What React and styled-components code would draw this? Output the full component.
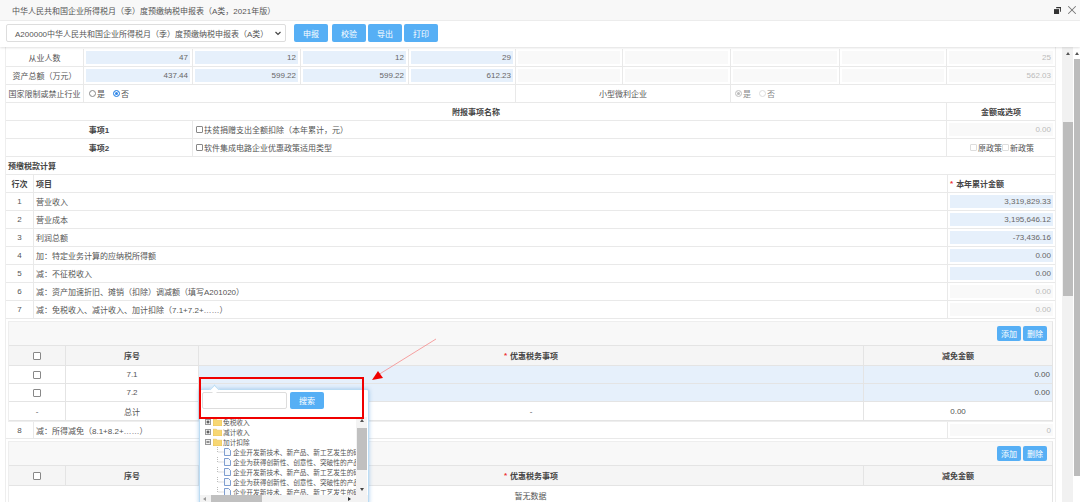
import React from 'react';
import styled, { createGlobalStyle } from 'styled-components';
import { X } from 'lucide-react';

const GlobalStyle = createGlobalStyle`
  html, body {
    margin: 0;
    padding: 0;
    background: #fff;
  }
  body {
    font-family: "Liberation Sans", "Noto Sans CJK SC", sans-serif;
    font-size: 8px;
    color: #555;
  }
`;

const Page = styled.div`
  position: relative;
  width: 1080px;
  height: 502px;
  overflow: hidden;
  display: flex;
  flex-direction: column;
`;

const TitleBar = styled.div`
  height: 20px;
  flex: none;
  display: flex;
  align-items: center;
  padding: 0 1.5px 0 12px;
  background: #f8f8f8;
  border-bottom: 1px solid #eee;
`;

const Title = styled.span`
  flex: 1;
`;

const WindowIcons = styled.div`
  display: flex;
  align-items: center;
  gap: 4px;
  color: #777;
`;

const Toolbar = styled.div`
  height: 26px;
  flex: none;
  display: flex;
  align-items: center;
  padding: 0 0 2px 6px;
  box-sizing: border-box;
  box-shadow: 0 1px 2px rgba(0, 0, 0, 0.12);
  position: relative;
  z-index: 1;
`;

const SelectBox = styled.div`
  width: 280px;
  height: 18px;
  box-sizing: border-box;
  border: 1px solid #ddd;
  border-radius: 2px;
  display: flex;
  align-items: center;
  justify-content: space-between;
  padding: 0 3px 0 8px;
  margin-right: 8px;
`;

const ActionButton = styled.button`
  width: ${(p) => p.$w || 34}px;
  height: ${(p) => p.$h || 18}px;
  margin-right: ${(p) => p.$gap ?? 2}px;
  padding: 0;
  border: none;
  border-radius: 2px;
  background: #56aff5;
  color: #fff;
  font: inherit;
  flex: none;
`;

const Body = styled.div`
  flex: 1;
  display: flex;
  min-height: 0;
`;

const Content = styled.div`
  width: 1049px;
  margin-left: 5px;
  padding-top: 2px;
  border-left: 1px solid #eee;
  border-right: 1px solid #eee;
  overflow: hidden;
`;

const Row = styled.div`
  display: grid;
  grid-template-columns: ${(p) => p.$cols};
  height: ${(p) => p.$h || 18}px;
  box-sizing: border-box;
  border-bottom: 1px solid #e9e9e9;
`;

const TOP_COLS = '78px 109px 108px 108px 107px 107px 108px 109px 107px 108px';

const Cell = styled.div`
  display: flex;
  align-items: center;
  justify-content: ${(p) => p.$align || 'flex-start'};
  padding: ${(p) => p.$pad || '0'};
  min-width: 0;
  white-space: nowrap;
  font-weight: ${(p) => (p.$bold ? 700 : 400)};
  color: ${(p) => (p.$bold ? '#444' : 'inherit')};
  border-right: ${(p) => (p.$last ? 'none' : '1px solid #e9e9e9')};
`;

const AmountBox = styled.div`
  flex: 1;
  align-self: stretch;
  margin: 2px;
  padding-right: 2px;
  display: flex;
  align-items: center;
  justify-content: flex-end;
  background: ${(p) => (p.$off ? '#f9f9f9' : '#e6f0fb')};
  color: ${(p) => (p.$off ? '#bbb' : '#666')};
`;

const Radio = styled.input.attrs({ type: 'radio', readOnly: true })`
  appearance: none;
  width: 7px;
  height: 7px;
  margin: 0 1px 0 0;
  border-radius: 50%;
  border: 1px solid ${(p) => (p.$off ? '#ddd' : '#888')};
  background: #fff;
  box-sizing: border-box;
  &:checked {
    border-color: ${(p) => (p.$off ? '#ccc' : '#3a8ee6')};
    background: ${(p) => (p.$off ? '#bbb' : '#2f86ea')};
    box-shadow: inset 0 0 0 1px #fff;
  }
`;

const RadioText = styled.span`
  margin-right: 8px;
  color: ${(p) => (p.$off ? '#888' : 'inherit')};
`;

const Check = styled.input.attrs({ type: 'checkbox', readOnly: true })`
  appearance: none;
  width: ${(p) => p.$size || 7}px;
  height: ${(p) => p.$size || 7}px;
  margin: 0 1px 0 0;
  border: 1px solid ${(p) => (p.$off ? '#ddd' : '#888')};
  border-radius: 1px;
  background: #fff;
  box-sizing: border-box;
  flex: none;
`;

const Star = styled.span`
  color: #e33;
  margin-right: 3px;
`;

const SubPanel = styled.div`
  margin: 2px 2px 0 2px;
  border: 1px solid #eee;
  border-right: 1px solid #e6e6e6;
`;

const PanelBar = styled.div`
  height: 23px;
  box-sizing: border-box;
  background: #f8f8f8;
  display: flex;
  align-items: center;
  justify-content: flex-end;
  padding: 0 5px 0 0;
`;

const SubTable = styled.div`
  width: 1044px;
  border: 1px solid #e4e4e4;
  border-width: 1px 1px 1px 0;
  box-sizing: border-box;
`;

const SUB_COLS = '57px 133px 665px 188px';

const SubRow = styled.div`
  display: grid;
  grid-template-columns: ${(p) => p.$cols || SUB_COLS};
  height: ${(p) => p.$h || 18}px;
  box-sizing: border-box;
  border-bottom: ${(p) => (p.$end ? 'none' : '1px solid #e4e4e4')};
  background: ${(p) => (p.$head ? '#f5f5f5' : '#fff')};
`;

const SubCell = styled.div`
  display: flex;
  align-items: center;
  justify-content: ${(p) => p.$align || 'center'};
  padding: ${(p) => p.$pad || '0'};
  background: ${(p) => (p.$blue ? '#e6f0fb' : 'transparent')};
  border-right: ${(p) => (p.$last ? 'none' : '1px solid #e4e4e4')};
  font-weight: ${(p) => (p.$bold ? 700 : 400)};
  color: ${(p) => (p.$bold ? '#444' : 'inherit')};
`;

const ScrollColumn = styled.div`
  width: ${(p) => p.$w}px;
  margin-left: ${(p) => p.$ml || 0}px;
  flex: none;
  display: flex;
  flex-direction: column;
  align-items: center;
  background: ${(p) => p.$bg || 'transparent'};
  overflow: hidden;
`;

const ScrollThumb = styled.div`
  flex: none;
  width: ${(p) => p.$w}px;
  height: ${(p) => p.$h}px;
  margin-top: ${(p) => p.$mt}px;
  background: #bcbcbc;
`;

const ArrowUp = styled.div`
  flex: none;
  margin-top: ${(p) => p.$mt || 5}px;
  width: 0;
  height: 0;
  border-left: 2.5px solid transparent;
  border-right: 2.5px solid transparent;
  border-bottom: 3px solid #555;
`;

/* things that lie over the page */
const Popup = styled.div`
  position: absolute;
  left: 199px;
  top: 389px;
  width: 170px;
  height: 116px;
  box-sizing: border-box;
  background: #fff;
  border: 1px solid #bcdcf3;
  border-radius: 2px;
  box-shadow: 0 0 4px rgba(110, 170, 225, 0.6);
  display: flex;
  flex-direction: column;
  z-index: 2;
  &::before {
    content: '';
    position: absolute;
    left: 11px;
    top: -4px;
    width: 6px;
    height: 6px;
    background: #fff;
    border-left: 1px solid #bcdcf3;
    border-top: 1px solid #bcdcf3;
    transform: rotate(45deg);
  }
`;

const SearchRow = styled.div`
  height: 27px;
  flex: none;
  display: flex;
  align-items: flex-start;
  padding: 2px 0 0 2px;
  box-sizing: border-box;
`;

const SearchInput = styled.input`
  width: 85px;
  height: 17px;
  box-sizing: border-box;
  border: 1px solid #ddd;
  border-radius: 2px;
  margin: 0 3px 0 0;
  padding: 0;
`;

const TreeArea = styled.div`
  height: 78px;
  flex: none;
  display: flex;
`;

const TreeList = styled.div`
  flex: 1;
  min-width: 0;
  overflow: hidden;
  font-size: 6.7px;
  padding-left: 5px;
`;

const TreeRow = styled.div`
  height: 10px;
  display: flex;
  align-items: center;
  white-space: nowrap;
  padding-left: ${(p) => (p.$leaf ? 12 : 0)}px;
`;

const TreeName = styled.span`
  margin-left: 1px;
`;

const TreeScroll = styled.div`
  width: 11px;
  flex: none;
  background: #f3f3f3;
  display: flex;
  flex-direction: column;
  align-items: center;
  margin-right: 1px;
`;

const TreeThumb = styled.div`
  width: 10px;
  height: 42px;
  margin-top: 6px;
  background: #c0c0c0;
`;

const ArrowDown = styled.div`
  width: 0;
  height: 0;
  margin-top: 18px;
  border-left: 2.5px solid transparent;
  border-right: 2.5px solid transparent;
  border-top: 3px solid #444;
`;

const HorizontalScroll = styled.div`
  height: 8px;
  background: #f3f3f3;
  display: flex;
  align-items: center;
  padding-left: 3px;
`;

const ArrowSide = styled.div`
  width: 0;
  height: 0;
  margin-right: ${(p) => p.$mr || 0}px;
  border-top: 2.5px solid transparent;
  border-bottom: 2.5px solid transparent;
  ${(p) => (p.$right ? 'border-left: 3px solid #333;' : 'border-right: 3px solid #999;')}
`;

const HorizontalThumb = styled.div`
  width: 51px;
  height: 8px;
  margin-right: 86px;
  background: #c0c0c0;
`;

const RedFrame = styled.div`
  position: absolute;
  left: 199px;
  top: 377px;
  width: 165px;
  height: 42px;
  box-sizing: border-box;
  border: 2px solid #f00000;
  z-index: 3;
  pointer-events: none;
`;

const ArrowMark = styled.svg`
  position: absolute;
  left: 368px;
  top: 336px;
  z-index: 3;
`;

const RestoreIcon = () => (
  <svg width="7" height="7" viewBox="0 0 8 8">
    <path d="M2.5 0H8v5.5H7V1.5H2.5z" fill="#333" />
    <rect x="0" y="2.4" width="5.8" height="5.6" fill="#333" />
  </svg>
);

const Chevron = () => (
  <svg width="8" height="8" viewBox="0 0 8 8" fill="none" stroke="#444" strokeWidth="1.2">
    <path d="M1.5 3l2.5 2.4L6.5 3" />
  </svg>
);

const ExpandBox = ({ open }) => (
  <svg width="6" height="6" viewBox="0 0 6 6" style={{ marginRight: 2, flex: 'none' }}>
    <rect x="0.5" y="0.5" width="5" height="5" fill="#eee" stroke="#999" />
    <path d={open ? 'M1.5 3h3' : 'M1.5 3h3M3 1.5v3'} stroke="#333" />
  </svg>
);

const Folder = () => (
  <svg width="9" height="8" viewBox="0 0 9 8" style={{ flex: 'none' }}>
    <path d="M0 1.2h3.4l1 1H9V8H0z" fill="#f7d774" stroke="#e3b94b" strokeWidth="0.5" />
  </svg>
);

const FileIcon = () => (
  <svg width="7" height="8" viewBox="0 0 7 8" style={{ flex: 'none', marginRight: 2 }}>
    <path d="M0.5 0.5h4l2 2v5h-6z" fill="#f4f8fd" stroke="#5f86c4" strokeWidth="0.8" />
  </svg>
);

const TreeLine = () => (
  <svg width="7" height="10" viewBox="0 0 7 10" style={{ flex: 'none' }}>
    <path d="M0.5 0v5H7" fill="none" stroke="#bbb" strokeDasharray="1 1" />
  </svg>
);

const topRows = [
  ['从业人数', ['47', '12', '12', '29'], '25'],
  ['资产总额（万元）', ['437.44', '599.22', '599.22', '612.23'], '562.03'],
];

const calcRows = [
  ['1', '营业收入', '3,319,829.33'],
  ['2', '营业成本', '3,195,646.12'],
  ['3', '利润总额', '-73,436.16'],
  ['4', '加：特定业务计算的应纳税所得额', '0.00'],
  ['5', '减：不征税收入', '0.00'],
  ['6', '减：资产加速折旧、摊销（扣除）调减额（填写A201020）', '0.00', true],
  ['7', '减：免税收入、减计收入、加计扣除（7.1+7.2+……）', '0.00', true],
];

const leaves = [
  '企业开发新技术、新产品、新工艺发生的研究开发费用加计扣除',
  '企业为获得创新性、创意性、突破性的产品进行创意设计活动',
  '企业开发新技术、新产品、新工艺发生的研究开发费用加计扣除',
  '企业为获得创新性、创意性、突破性的产品进行创意设计活动',
  '企业开发新技术、新产品、新工艺发生的研究开发费用加计扣除',
];

const CALC_COLS = '28px 914px 107px';

function DeductPanel({ children }) {
  return (
    <SubPanel>
      <PanelBar>
        <ActionButton $w={24} $h={15} $gap={2}>添加</ActionButton>
        <ActionButton $w={24} $h={15} $gap={0}>删除</ActionButton>
      </PanelBar>
      <SubTable>
        <SubRow $head $h={20}>
          <SubCell><Check $size={8} /></SubCell>
          <SubCell $bold>序号</SubCell>
          <SubCell $bold><Star>*</Star>优惠税务事项</SubCell>
          <SubCell $bold $last>减免金额</SubCell>
        </SubRow>
        {children}
      </SubTable>
    </SubPanel>
  );
}

export default function App() {
  return (
    <Page>
      <GlobalStyle />
      <TitleBar>
        <Title>中华人民共和国企业所得税月（季）度预缴纳税申报表（A类，2021年版）</Title>
        <WindowIcons>
          <RestoreIcon />
          <X size={14} strokeWidth={1.8} />
        </WindowIcons>
      </TitleBar>
      <Toolbar>
        <SelectBox>
          <span>A200000中华人民共和国企业所得税月（季）度预缴纳税申报表（A类）</span>
          <Chevron />
        </SelectBox>
        <ActionButton $gap={4}>申报</ActionButton>
        <ActionButton>校验</ActionButton>
        <ActionButton>导出</ActionButton>
        <ActionButton>打印</ActionButton>
      </Toolbar>
      <Body>
        <Content>
          {topRows.map(([label, values, last]) => (
            <Row key={label} $cols={TOP_COLS}>
              <Cell $align="center">{label}</Cell>
              {values.map((v, i) => (
                <Cell key={i}><AmountBox>{v}</AmountBox></Cell>
              ))}
              <Cell><AmountBox $off /></Cell>
              <Cell><AmountBox $off /></Cell>
              <Cell><AmountBox $off /></Cell>
              <Cell><AmountBox $off /></Cell>
              <Cell $last><AmountBox $off>{last}</AmountBox></Cell>
            </Row>
          ))}
          <Row $cols="78px 432px 215px 324px">
            <Cell $align="center">国家限制或禁止行业</Cell>
            <Cell $pad="0 0 0 5px">
              <Radio name="limit" />
              <RadioText>是</RadioText>
              <Radio name="limit" defaultChecked />
              <RadioText>否</RadioText>
            </Cell>
            <Cell $align="center">小型微利企业</Cell>
            <Cell $pad="0 0 0 4px" $last>
              <Radio name="small" $off defaultChecked disabled />
              <RadioText $off>是</RadioText>
              <Radio name="small" $off disabled />
              <RadioText $off>否</RadioText>
            </Cell>
          </Row>
          <Row $cols="941px 108px">
            <Cell $align="center" $bold>附报事项名称</Cell>
            <Cell $align="center" $bold $last>金额或选项</Cell>
          </Row>
          <Row $cols="187px 754px 108px">
            <Cell $align="center" $bold>事项1</Cell>
            <Cell $pad="0 0 0 3px"><Check />扶贫捐赠支出全额扣除（本年累计，元）</Cell>
            <Cell $last><AmountBox $off>0.00</AmountBox></Cell>
          </Row>
          <Row $cols="187px 754px 108px">
            <Cell $align="center" $bold>事项2</Cell>
            <Cell $pad="0 0 0 3px"><Check />软件集成电路企业优惠政策适用类型</Cell>
            <Cell $last $align="flex-end" $pad="0 21px 0 0">
              <Check $off />原政策
              <Check $off />新政策
            </Cell>
          </Row>
          <Row $cols="1049px">
            <Cell $bold $last $pad="0 0 0 2px">预缴税款计算</Cell>
          </Row>
          <Row $cols={CALC_COLS}>
            <Cell $align="center" $bold>行次</Cell>
            <Cell $bold $pad="0 0 0 2px">项目</Cell>
            <Cell $bold $last $pad="0 0 0 2px"><Star>*</Star>本年累计金额</Cell>
          </Row>
          {calcRows.map(([no, name, amount, off]) => (
            <Row key={no} $cols={CALC_COLS}>
              <Cell $align="center">{no}</Cell>
              <Cell $pad="0 0 0 2px">{name}</Cell>
              <Cell $last><AmountBox $off={off}>{amount}</AmountBox></Cell>
            </Row>
          ))}
          <DeductPanel>
            <SubRow>
              <SubCell><Check $size={8} /></SubCell>
              <SubCell>7.1</SubCell>
              <SubCell $blue />
              <SubCell $blue $last $align="flex-end" $pad="0 2px 0 0">0.00</SubCell>
            </SubRow>
            <SubRow>
              <SubCell><Check $size={8} /></SubCell>
              <SubCell>7.2</SubCell>
              <SubCell $blue />
              <SubCell $blue $last $align="flex-end" $pad="0 2px 0 0">0.00</SubCell>
            </SubRow>
            <SubRow $end>
              <SubCell>-</SubCell>
              <SubCell>总计</SubCell>
              <SubCell>-</SubCell>
              <SubCell $last>0.00</SubCell>
            </SubRow>
          </DeductPanel>
          <Row $cols={CALC_COLS} $h={17}>
            <Cell $align="center">8</Cell>
            <Cell $pad="0 0 0 2px">减：所得减免（8.1+8.2+……）</Cell>
            <Cell $last><AmountBox $off>0</AmountBox></Cell>
          </Row>
          <DeductPanel>
            <SubRow $cols="1fr" $end>
              <SubCell $last>暂无数据</SubCell>
            </SubRow>
          </DeductPanel>
        </Content>
        <ScrollColumn $w={11} $ml={6} $bg="#f1f1f1">
          <ArrowUp />
          <ScrollThumb $w={10} $h={174} $mt={67} />
        </ScrollColumn>
        <ScrollColumn $w={6} $ml={1}>
          <ArrowUp />
          <ScrollThumb $w={6} $h={417} $mt={4} />
        </ScrollColumn>
      </Body>
      <Popup>
        <SearchRow>
          <SearchInput />
          <ActionButton $h={17} $gap={0}>搜索</ActionButton>
        </SearchRow>
        <TreeArea>
          <TreeList>
            <TreeRow><ExpandBox /><Folder /><TreeName>免税收入</TreeName></TreeRow>
            <TreeRow><ExpandBox /><Folder /><TreeName>减计收入</TreeName></TreeRow>
            <TreeRow><ExpandBox open /><Folder /><TreeName>加计扣除</TreeName></TreeRow>
            {leaves.map((leaf, i) => (
              <TreeRow key={i} $leaf>
                <TreeLine />
                <FileIcon />
                {leaf}
              </TreeRow>
            ))}
          </TreeList>
          <TreeScroll>
            <ArrowUp $mt={2} />
            <TreeThumb />
            <ArrowDown />
          </TreeScroll>
        </TreeArea>
        <HorizontalScroll>
          <ArrowSide $mr={5} />
          <HorizontalThumb />
          <ArrowSide $right />
        </HorizontalScroll>
      </Popup>
      <RedFrame />
      <ArrowMark width="72" height="48" viewBox="0 0 72 48">
        <path d="M68 3L10 39" stroke="#f58a8a" strokeWidth="0.8" fill="none" />
        <path d="M4 44L10 35L15 42z" fill="#f00000" />
      </ArrowMark>
    </Page>
  );
}
